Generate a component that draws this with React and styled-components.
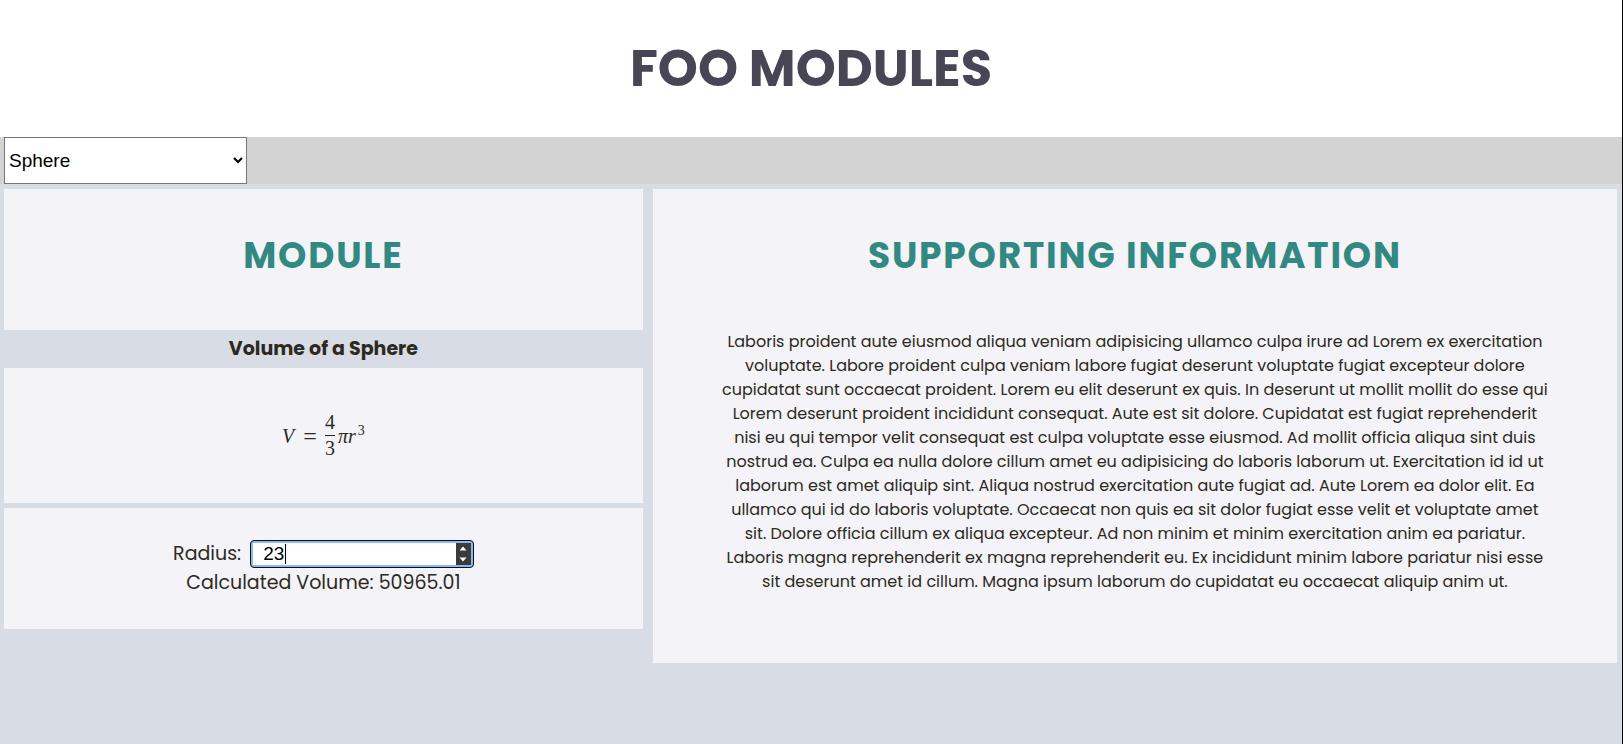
import React, { useState } from "react";
import styled, { createGlobalStyle } from "styled-components";

const GlobalStyle = createGlobalStyle`
  * {
    box-sizing: border-box;
  }

  body {
    margin: 0;
    background: #d8dce5;
    color: #2c2a20;
    font-family: Poppins, Inter, "Open Sans", sans-serif;
    font-size: 16px;
    line-height: 24px;
  }
`;

const Page = styled.div`
  min-height: 100vh;
  border-right: 1px solid #000;
`;

const Header = styled.header`
  padding: 32px 0;
  background: #fff;
  text-align: center;
`;

const SiteTitle = styled.h1`
  margin: 0;
  color: #484655;
  font-size: 51px;
  line-height: 73px;
  font-weight: 700;
`;

const Toolbar = styled.nav`
  display: flex;
  padding-left: 4px;
  background: #d3d3d3;
`;

const ShapeSelect = styled.select`
  width: 15%;
  height: 47px;
  padding: 0;
  border: 1px solid #767676;
  border-radius: 0;
  background: #fff;
  color: #000;
  font-family: "Liberation Sans", Arial, sans-serif;
  font-size: 19px;
`;

const Columns = styled.main`
  display: grid;
  grid-template-columns: 40% 60%;
  align-items: start;
  padding-top: 5px;
  text-align: center;
`;

const Column = styled.section`
  padding: 0 ${(p) => p.$gutter} 0 4px;
`;

const Panel = styled.div`
  padding: ${(p) => p.$pad || "0"};
  margin-bottom: ${(p) => (p.$spaced ? "5px" : "0")};
  background: #f3f3f8;
`;

const PanelTitle = styled.h2`
  margin: 0;
  padding: 40px 0 47px;
  color: #318982;
  font-size: 36px;
  line-height: 54px;
  font-weight: 700;
  letter-spacing: 0.05em;
`;

const ModuleTitle = styled.h3`
  margin: 0;
  font-size: 19px;
  line-height: 38px;
  font-weight: 700;
`;

const Formula = styled.div`
  display: flex;
  align-items: center;
  justify-content: center;
  font-family: "Liberation Serif", "Times New Roman", serif;
  font-size: 20px;
`;

const Variable = styled.i`
  padding-right: 2px;
`;

const Equals = styled.span`
  padding: 0 8px 0 7px;
  font-size: 24px;
`;

const Fraction = styled.span`
  display: grid;
  margin-right: 3px;
  line-height: 25px;
`;

const Numerator = styled.span`
  border-bottom: 1px solid currentColor;
`;

const Power = styled.sup`
  padding-left: 2px;
  font-size: 14px;
  line-height: 0;
`;

const Field = styled.div`
  display: flex;
  align-items: center;
  justify-content: center;
  gap: 9px;
  font-size: 19px;
  line-height: 28px;
`;

const NumberBox = styled.div`
  position: relative;
  display: flex;
  width: 35%;
  height: 28px;
  padding: 2px;
  border: 1px solid #101010;
  border-radius: 4px;
  background: #8ab8f8;
  font-family: "Liberation Sans", Arial, sans-serif;
  font-size: 19px;
`;

const NumberInput = styled.input`
  flex: 1;
  min-width: 0;
  height: 22px;
  padding: 0 0 0 10px;
  border: 0;
  outline: 0;
  background: #fff;
  color: #000;
  font: inherit;
  line-height: 22px;
  appearance: textfield;

  &::-webkit-inner-spin-button {
    display: none;
  }
`;

const Caret = styled.span`
  position: absolute;
  top: 3px;
  left: calc(13px + 2ch);
  width: 1px;
  height: 20px;
  background: #000;
`;

const Stepper = styled.div`
  display: grid;
  grid-template-rows: 1fr 1fr;
  width: 15px;
  background: #3b3b3b;
`;

const StepButton = styled.button`
  display: flex;
  align-items: center;
  justify-content: center;
  padding: 0;
  border: 0;
  background: none;
`;

const Result = styled.output`
  display: block;
  font-size: 19px;
  line-height: 30px;
`;

const Supporting = styled.p`
  margin: 0;
`;

const INFO =
  "Laboris proident aute eiusmod aliqua veniam adipisicing ullamco culpa irure ad Lorem ex exercitation voluptate. Labore proident culpa veniam labore fugiat deserunt voluptate fugiat excepteur dolore cupidatat sunt occaecat proident. Lorem eu elit deserunt ex quis. In deserunt ut mollit mollit do esse qui Lorem deserunt proident incididunt consequat. Aute est sit dolore. Cupidatat est fugiat reprehenderit nisi eu qui tempor velit consequat est culpa voluptate esse eiusmod. Ad mollit officia aliqua sint duis nostrud ea. Culpa ea nulla dolore cillum amet eu adipisicing do laboris laborum ut. Exercitation id id ut laborum est amet aliquip sint. Aliqua nostrud exercitation aute fugiat ad. Aute Lorem ea dolor elit. Ea ullamco qui id do laboris voluptate. Occaecat non quis ea sit dolor fugiat esse velit et voluptate amet sit. Dolore officia cillum ex aliqua excepteur. Ad non minim et minim exercitation anim ea pariatur. Laboris magna reprehenderit ex magna reprehenderit eu. Ex incididunt minim labore pariatur nisi esse sit deserunt amet id cillum. Magna ipsum laborum do cupidatat eu occaecat aliquip anim ut.";

export default function App() {
  const [radius, setRadius] = useState(23);
  const volume = ((4 / 3) * Math.PI * radius ** 3).toFixed(2);

  return (
    <Page>
      <GlobalStyle />
      <Header>
        <SiteTitle>FOO MODULES</SiteTitle>
      </Header>
      <Toolbar>
        <ShapeSelect aria-label="Module">
          <option>Sphere</option>
        </ShapeSelect>
      </Toolbar>
      <Columns>
        <Column $gutter="6px">
          <Panel>
            <PanelTitle>MODULE</PanelTitle>
          </Panel>
          <ModuleTitle>Volume of a Sphere</ModuleTitle>
          <Panel $pad="42px 0" $spaced>
            <Formula>
              <Variable>V</Variable>
              <Equals>=</Equals>
              <Fraction>
                <Numerator>4</Numerator>
                <span>3</span>
              </Fraction>
              <span>
                <i>πr</i>
                <Power>3</Power>
              </span>
            </Formula>
          </Panel>
          <Panel $pad="32px 0 31px">
            <Field>
              <label htmlFor="radius">Radius:</label>
              <NumberBox>
                <NumberInput
                  id="radius"
                  type="number"
                  value={radius}
                  onChange={(e) => setRadius(e.target.value)}
                />
                <Caret />
                <Stepper>
                  <StepButton aria-label="Increase" onClick={() => setRadius(Number(radius) + 1)}>
                    <svg width="8" height="5" viewBox="0 0 8 5" fill="#fff">
                      <path d="M4 0.5L7.5 4.5H0.5Z" />
                    </svg>
                  </StepButton>
                  <StepButton aria-label="Decrease" onClick={() => setRadius(Number(radius) - 1)}>
                    <svg width="8" height="5" viewBox="0 0 8 5" fill="#fff">
                      <path d="M4 4.5L7.5 0.5H0.5Z" />
                    </svg>
                  </StepButton>
                </Stepper>
              </NumberBox>
            </Field>
            <Result htmlFor="radius">Calculated Volume: {volume}</Result>
          </Panel>
        </Column>
        <Column $gutter="5px">
          <Panel $pad="0 68px 69px">
            <PanelTitle>SUPPORTING INFORMATION</PanelTitle>
            <Supporting>{INFO}</Supporting>
          </Panel>
        </Column>
      </Columns>
    </Page>
  );
}
